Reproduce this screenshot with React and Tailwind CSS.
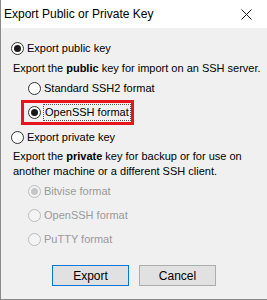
import React from 'react';

const Radio = ({ checked, disabled }) => (
  <span
    className={`w-[13px] h-[13px] rounded-full border flex items-center justify-center shrink-0 ${
      disabled ? 'border-[#bcbcbc] bg-[#f4f4f4]' : 'border-[#333] bg-white'
    }`}
  >
    {checked && (
      <span className={`w-[7px] h-[7px] rounded-full ${disabled ? 'bg-[#c6c6c6]' : 'bg-[#1a1a1a]'}`} />
    )}
  </span>
);

const Option = ({ label, checked, disabled, className = '' }) => (
  <div className={`flex items-center gap-[3px] h-[16px] ${className}`}>
    <Radio checked={checked} disabled={disabled} />
    <span className={disabled ? 'text-[#9a9a9a]' : 'text-black'}>{label}</span>
  </div>
);

export default function App() {
  return (
    <div className="w-[267px] h-[300px] bg-[#f0f0f0] border-l border-b border-[#8a8a8a] flex flex-col text-[11px] leading-none overflow-hidden" style={{ fontFamily: '"Liberation Sans", Arial, sans-serif' }}>
      <div className="h-[28px] bg-white flex items-center justify-between pl-[3px] pr-[15px] shrink-0">
        <span className="text-[12px] text-black">Export Public or Private Key</span>
        <svg width="11" height="11" viewBox="0 0 11 11">
          <path d="M0.5 0.5 L10.5 10.5 M10.5 0.5 L0.5 10.5" stroke="#222" strokeWidth="1" />
        </svg>
      </div>

      <div className="flex flex-col pl-[10px] pt-[12px]">
        <Option label="Export public key" checked />
        <p className="mt-[4px] ml-[2px] h-[16px] flex items-center">
          <span>Export the <b>public</b> key for import on an SSH server.</span>
        </p>
        <Option label="Standard SSH2 format" className="ml-[17px] mt-[4px]" />
        <div className="ml-[10px] mt-[4px] w-[113px] h-[25px] border-[3px] border-[#e8141e] flex items-center pl-[4px]">
          <div className="flex items-center gap-[2px]">
            <Radio checked />
            <span className="border border-dotted border-[#555] px-[1px] py-[2px]">OpenSSH format</span>
          </div>
        </div>
        <Option label="Export private key" className="mt-[4px]" />
        <p className="mt-[4px] ml-[2px] h-[30px] leading-[15px]">
          Export the <b>private</b> key for backup or for use on
          <br />
          another machine or a different SSH client.
        </p>
        <Option label="Bitvise format" checked disabled className="ml-[17px] mt-[4px]" />
        <Option label="OpenSSH format" disabled className="ml-[17px] mt-[8px]" />
        <Option label="PuTTY format" disabled className="ml-[17px] mt-[8px]" />
      </div>

      <div className="flex gap-[10px] pl-[51px] mt-[18px]">
        <button className="w-[77px] h-[21px] bg-[#e1e1e1] border border-[#0078d7] text-black text-[12px]">Export</button>
        <button className="w-[77px] h-[21px] bg-[#e1e1e1] border border-[#adadad] text-black text-[12px]">Cancel</button>
      </div>
    </div>
  );
}
